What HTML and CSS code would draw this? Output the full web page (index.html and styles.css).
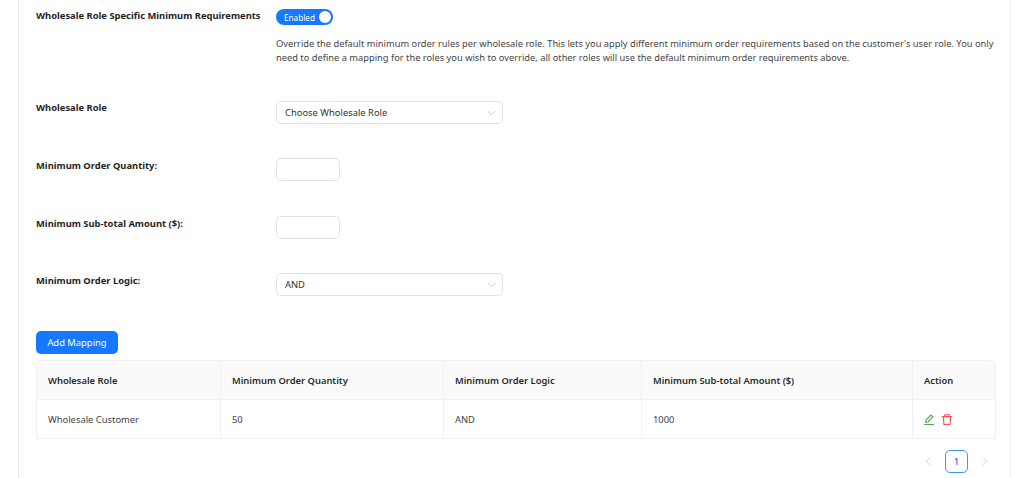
FILE: index.html
```html
<!DOCTYPE html>
<html lang="en">
<head>
  <meta charset="UTF-8">
  <title>Wholesale Role Minimum Requirements</title>
  <link rel="stylesheet" href="styles.css">
</head>
<body>
  <div class="panel">
    <div class="form-row row-toggle">
      <label class="form-label">Wholesale Role Specific Minimum Requirements</label>
      <div class="form-control">
        <div class="switch"><span class="switch-text">Enabled</span><span class="switch-knob"></span></div>
        <p class="help">Override the default minimum order rules per wholesale role. This lets you apply different minimum order requirements based on the customer's user role. You only need to define a mapping for the roles you wish to override, all other roles will use the default minimum order requirements above.</p>
      </div>
    </div>

    <div class="form-row row-role">
      <label class="form-label">Wholesale Role</label>
      <div class="form-control">
        <div class="select">Choose Wholesale Role
          <svg class="chevron" viewBox="0 0 10 6"><path d="M1 1l4 4 4-4"/></svg>
        </div>
      </div>
    </div>

    <div class="form-row row-qty">
      <label class="form-label">Minimum Order Quantity:</label>
      <div class="form-control"><div class="input"></div></div>
    </div>

    <div class="form-row row-amount">
      <label class="form-label">Minimum Sub-total Amount ($):</label>
      <div class="form-control"><div class="input"></div></div>
    </div>

    <div class="form-row row-logic">
      <label class="form-label">Minimum Order Logic:</label>
      <div class="form-control">
        <div class="select">AND
          <svg class="chevron" viewBox="0 0 10 6"><path d="M1 1l4 4 4-4"/></svg>
        </div>
      </div>
    </div>

    <button class="btn-add">Add Mapping</button>

    <table class="mapping-table">
      <thead>
        <tr>
          <th class="col-role">Wholesale Role</th>
          <th class="col-qty">Minimum Order Quantity</th>
          <th class="col-logic">Minimum Order Logic</th>
          <th class="col-amount">Minimum Sub-total Amount ($)</th>
          <th>Action</th>
        </tr>
      </thead>
      <tbody>
        <tr>
          <td>Wholesale Customer</td>
          <td>50</td>
          <td>AND</td>
          <td>1000</td>
          <td>
            <div class="actions">
              <svg class="icon-edit" viewBox="0 0 11 11"><path d="M0 10.5h10M1.6 8.4l.4-2.4L6.9 1l2 2-4.9 5z"/></svg>
              <svg class="icon-delete" viewBox="0 0 10 11"><path d="M0 2.6h10M2.8 2.6V.8h4.4v1.8M1.4 2.6l.5 7.9h6.2l.5-7.9"/></svg>
            </div>
          </td>
        </tr>
      </tbody>
    </table>

    <div class="pagination">
      <svg class="page-arrow" viewBox="0 0 6 10"><path d="M5 1L1 5l4 4"/></svg>
      <span class="page-current">1</span>
      <svg class="page-arrow" viewBox="0 0 6 10"><path d="M1 1l4 4-4 4"/></svg>
    </div>
  </div>
</body>
</html>
```

FILE: styles.css
```css
html, body {
  margin: 0;
  padding: 0;
  height: 478px;
  overflow: hidden;
  background-color: #ffffff;
}
body {
  font-family: 'Noto Sans', 'Open Sans', sans-serif;
  font-size: 9.4px;
  color: #2c2c2c;
}
.panel {
  box-sizing: border-box;
  width: 993px;
  height: 478px;
  margin-left: 18px;
  padding: 9px 14px 0 17px;
  border-left: 1px solid #e8e8e8;
  border-right: 1px solid #efefef;
}
.form-row {
  display: flex;
}
.form-label {
  width: 240px;
  flex: none;
  font-weight: 700;
  color: #1f1f1f;
  line-height: 14px;
}
.form-control {
  flex: 1;
}
.row-role {
  margin-top: 36px;
}
.row-qty {
  margin-top: 34px;
}
.row-amount {
  margin-top: 35px;
}
.row-logic {
  margin-top: 34px;
}
.row-qty .form-label,
.row-amount .form-label,
.row-logic .form-label {
  padding-top: 1px;
}
.switch {
  box-sizing: border-box;
  width: 57px;
  height: 16px;
  border-radius: 8px;
  background-color: #1677ff;
  display: flex;
  align-items: center;
  justify-content: space-between;
  padding: 0 2px 0 8px;
}
.switch-text {
  color: #ffffff;
  font-size: 8.2px;
}
.switch-knob {
  width: 12px;
  height: 12px;
  border-radius: 50%;
  background-color: #ffffff;
}
.help {
  margin: 12px 0 0;
  font-size: 9.3px;
  line-height: 14px;
  color: #444444;
}
.select {
  box-sizing: border-box;
  width: 227px;
  height: 23px;
  padding-left: 8px;
  border: 1px solid #e2e2e2;
  border-radius: 5px;
  display: flex;
  align-items: center;
  justify-content: space-between;
  color: #333333;
}
.chevron {
  width: 9px;
  height: 6px;
  margin-right: 6px;
  fill: none;
  stroke: #c4c4c4;
  stroke-width: 1;
}
.input {
  box-sizing: border-box;
  width: 64px;
  height: 23px;
  border: 1px solid #e2e2e2;
  border-radius: 5px;
}
.btn-add {
  display: block;
  width: 82px;
  height: 23px;
  margin-top: 35px;
  padding: 0;
  border: none;
  border-radius: 5px;
  background-color: #1677ff;
  color: #ffffff;
  font-family: inherit;
  font-size: 9.4px;
}
.mapping-table {
  width: 960px;
  margin-top: 6px;
  border-collapse: separate;
  border-spacing: 0;
  table-layout: fixed;
  border-top: 1px solid #f0f0f0;
  border-left: 1px solid #f0f0f0;
  border-radius: 6px 6px 0 0;
  font-size: 9.4px;
}
.mapping-table th,
.mapping-table td {
  height: 38px;
  padding: 0 11px;
  border-right: 1px solid #f0f0f0;
  border-bottom: 1px solid #f0f0f0;
  text-align: left;
}
.mapping-table th {
  background-color: #fafafa;
  font-weight: 600;
  color: #2a2a2a;
}
.mapping-table th:first-child {
  border-top-left-radius: 6px;
}
.mapping-table th:last-child {
  border-top-right-radius: 6px;
}
.mapping-table td {
  color: #444444;
}
.col-role {
  width: 161px;
}
.col-qty {
  width: 200px;
}
.col-logic {
  width: 175px;
}
.col-amount {
  width: 248px;
}
.actions {
  display: flex;
  gap: 7px;
}
.actions svg {
  height: 11px;
  fill: none;
  stroke-width: 1.1;
}
.icon-edit {
  width: 11px;
  stroke: #52a852;
}
.icon-delete {
  width: 10px;
  stroke: #ff4d4f;
}
.pagination {
  display: flex;
  justify-content: flex-end;
  align-items: center;
  margin-top: 11px;
  width: 952px;
}
.page-arrow {
  width: 6px;
  height: 9px;
  fill: none;
  stroke: #c8c8c8;
  stroke-width: 1;
}
.page-current {
  box-sizing: border-box;
  width: 23px;
  height: 23px;
  margin: 0 14px;
  border: 1px solid #4096ff;
  border-radius: 5px;
  color: #1677ff;
  font-weight: 500;
  display: flex;
  align-items: center;
  justify-content: center;
}
```
